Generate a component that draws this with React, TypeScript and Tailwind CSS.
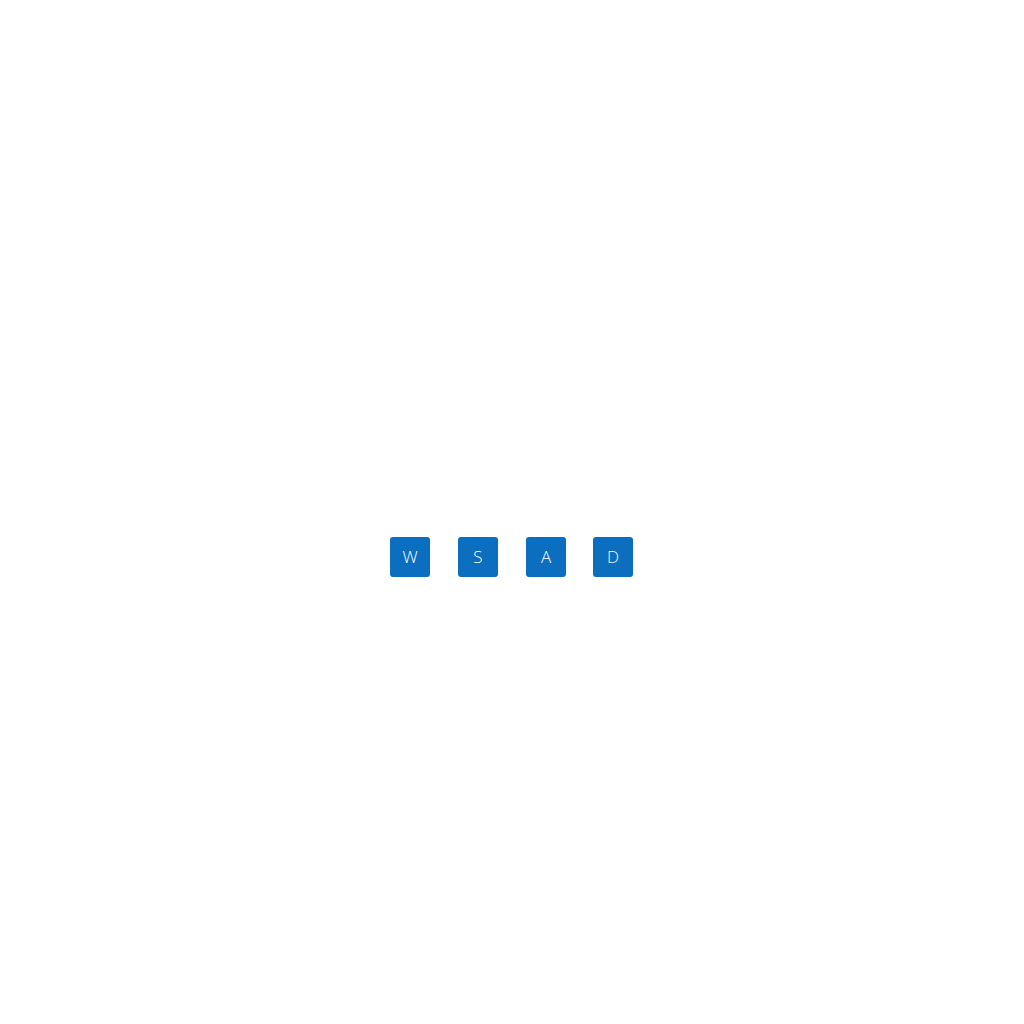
const keys = ['W', 'S', 'A', 'D']

export default function App() {
  return (
    <div className="min-h-screen bg-white pt-[537px] pr-px flex justify-center">
      <div className="flex gap-7">
        {keys.map((k, i) => (
          <div
            key={k}
            className={`w-10 h-10 rounded-[3px] bg-[#0b6ebf] text-white flex items-center justify-center text-[17px] font-light font-['Open_Sans',sans-serif] ${
              i === keys.length - 1 ? '-ml-px' : ''
            }`}
          >
            {k}
          </div>
        ))}
      </div>
    </div>
  )
}
